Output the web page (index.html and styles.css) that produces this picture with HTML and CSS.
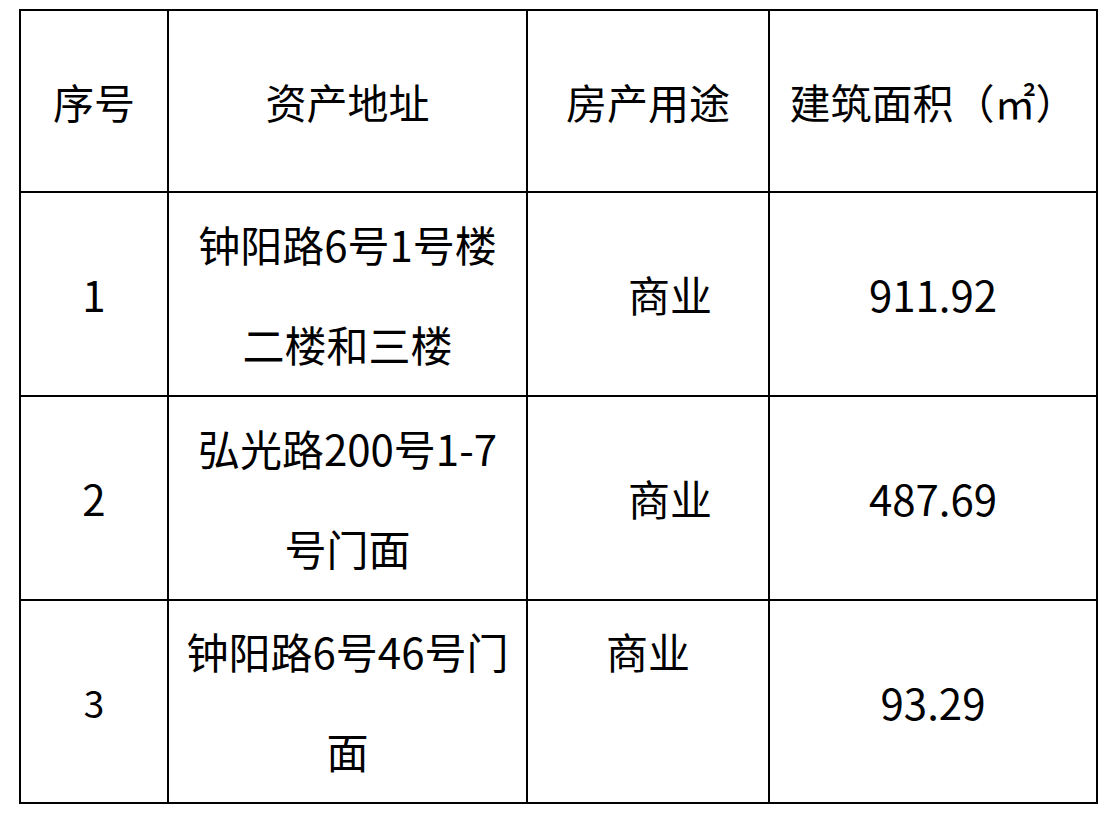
FILE: index.html
```html
<!DOCTYPE html>
<html lang="zh-CN">
<head>
<meta charset="utf-8">
<title>资产列表</title>
<link rel="stylesheet" href="styles.css">
</head>
<body>
<table class="assets">
  <colgroup>
    <col class="c1"><col class="c2"><col class="c3"><col class="c4">
  </colgroup>
  <tr class="head">
    <td>序号</td>
    <td>资产地址</td>
    <td>房产用途</td>
    <td>建筑面积（㎡）</td>
  </tr>
  <tr class="row">
    <td>1</td>
    <td>钟阳路6号1号楼<br>二楼和三楼</td>
    <td class="shift">商业</td>
    <td>911.92</td>
  </tr>
  <tr class="row">
    <td>2</td>
    <td>弘光路200号1-7<br>号门面</td>
    <td class="shift">商业</td>
    <td>487.69</td>
  </tr>
  <tr class="row last">
    <td class="small">3</td>
    <td class="top">钟阳路6号46号门<br>面</td>
    <td class="top">商业</td>
    <td>93.29</td>
  </tr>
</table>
</body>
</html>
```

FILE: styles.css
```css
html, body {
  margin: 0;
  padding: 0;
  background: #ffffff;
}

body {
  padding: 9px 0 0 19px;
  font-family: "Noto Sans CJK SC", "Noto Sans", sans-serif;
  color: #000000;
}

.assets {
  border-spacing: 0;
  table-layout: fixed;
  width: 1079px;
  border-top: 2px solid #000;
  border-left: 2px solid #000;
}

.c1 { width: 148px; }
.c2 { width: 359px; }
.c3 { width: 242px; }
.c4 { width: 328px; }

.assets td {
  box-sizing: border-box;
  padding: 0;
  border-right: 2px solid #000;
  border-bottom: 2px solid #000;
  text-align: center;
  vertical-align: middle;
  font-size: 42px;
  line-height: 100px;
  white-space: nowrap;
}

.head { height: 182px; }
.head td { font-size: 41px; }
.row { height: 204px; }
.row.last { height: 203px; }

.assets td.shift { padding-left: 44px; }
.assets td.top { vertical-align: top; }
.assets td.small { font-size: 37px; }
```
